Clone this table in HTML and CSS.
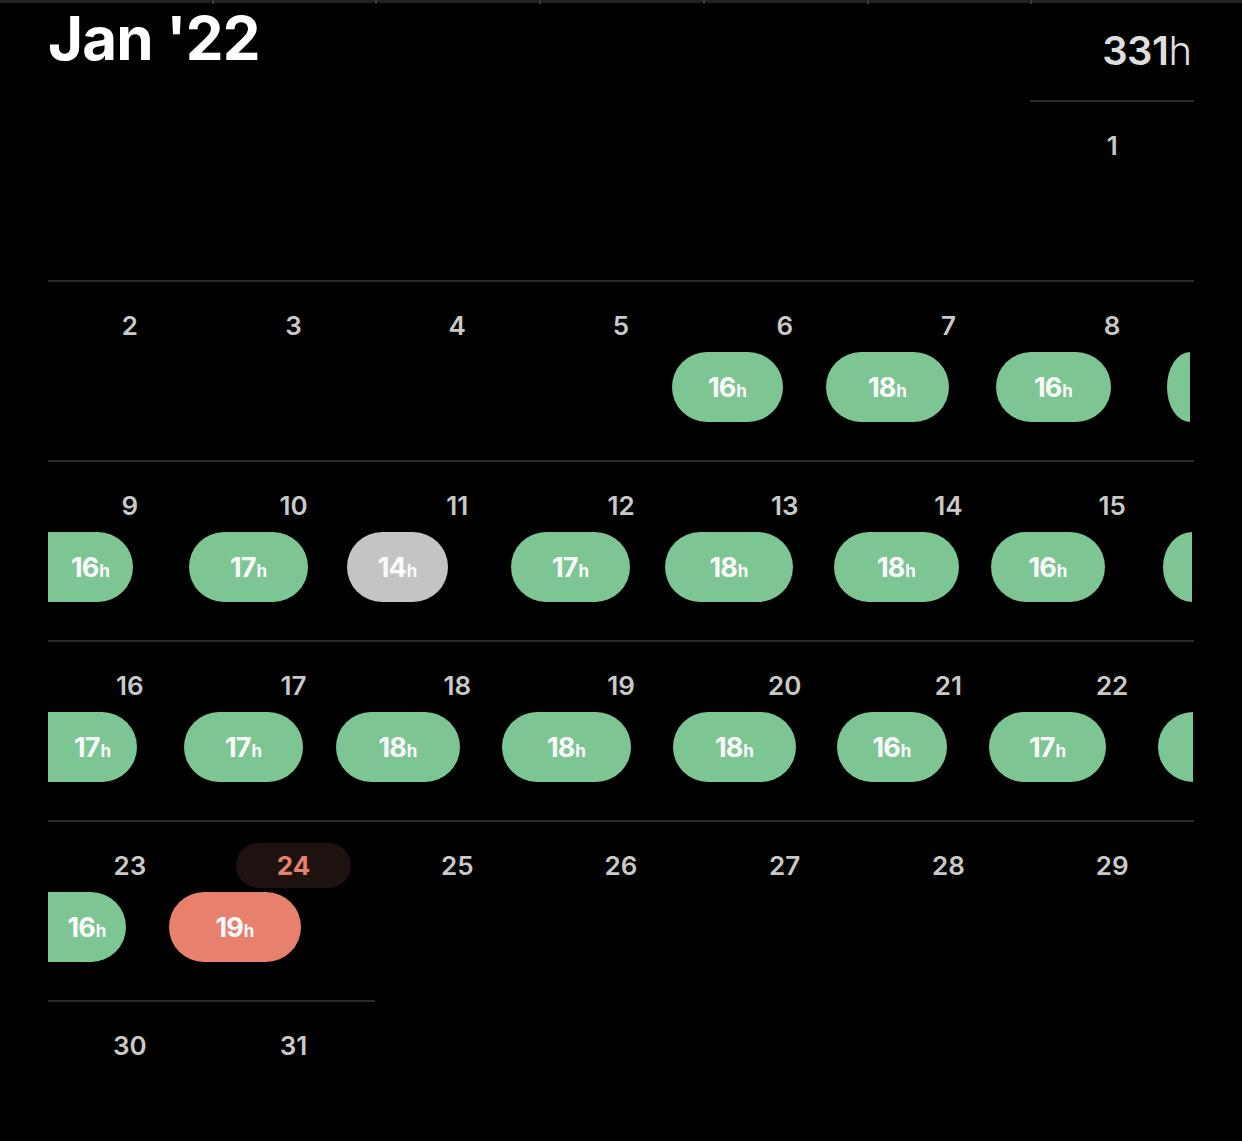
FILE: index.html
```html
<!DOCTYPE html>
<html lang="en">
<head>
<meta charset="utf-8">
<title>Jan '22</title>
<link rel="stylesheet" href="styles.css">
</head>
<body>
<div class="top-rule">
  <div class="ticks"><span></span><span></span><span></span><span></span><span></span><span></span><span></span></div>
</div>
<header class="head">
  <h1 class="month">Jan '22</h1>
  <div class="total">331<span class="unit">h</span></div>
</header>
<main class="cal">
  <section class="week">
    <div class="cell empty"></div><div class="cell empty"></div><div class="cell empty"></div><div class="cell empty"></div><div class="cell empty"></div><div class="cell empty"></div>
    <div class="cell"><span class="day">1</span></div>
  </section>

  <section class="week">
    <div class="cell"><span class="day">2</span></div>
    <div class="cell"><span class="day">3</span></div>
    <div class="cell"><span class="day">4</span></div>
    <div class="cell"><span class="day">5</span></div>
    <div class="cell"><span class="day">6</span></div>
    <div class="cell"><span class="day">7</span></div>
    <div class="cell"><span class="day">8</span></div>
    <div class="track">
      <div class="pill" style="left:624px;width:111px">16<span class="u">h</span></div>
      <div class="pill" style="left:778px;width:123px">18<span class="u">h</span></div>
      <div class="pill" style="left:948px;width:115px">16<span class="u">h</span></div>
      <div class="pill cut-right" style="left:1119px;width:23px"></div>
    </div>
  </section>

  <section class="week">
    <div class="cell"><span class="day">9</span></div>
    <div class="cell"><span class="day">10</span></div>
    <div class="cell"><span class="day">11</span></div>
    <div class="cell"><span class="day">12</span></div>
    <div class="cell"><span class="day">13</span></div>
    <div class="cell"><span class="day">14</span></div>
    <div class="cell"><span class="day">15</span></div>
    <div class="track">
      <div class="pill cut-left" style="left:0;width:85px">16<span class="u">h</span></div>
      <div class="pill" style="left:141px;width:119px">17<span class="u">h</span></div>
      <div class="pill grey" style="left:299px;width:101px">14<span class="u">h</span></div>
      <div class="pill" style="left:463px;width:119px">17<span class="u">h</span></div>
      <div class="pill" style="left:617px;width:128px">18<span class="u">h</span></div>
      <div class="pill" style="left:786px;width:125px">18<span class="u">h</span></div>
      <div class="pill" style="left:943px;width:114px">16<span class="u">h</span></div>
      <div class="pill cut-right" style="left:1115px;width:29px"></div>
    </div>
  </section>

  <section class="week">
    <div class="cell"><span class="day">16</span></div>
    <div class="cell"><span class="day">17</span></div>
    <div class="cell"><span class="day">18</span></div>
    <div class="cell"><span class="day">19</span></div>
    <div class="cell"><span class="day">20</span></div>
    <div class="cell"><span class="day">21</span></div>
    <div class="cell"><span class="day">22</span></div>
    <div class="track">
      <div class="pill cut-left" style="left:0;width:89px">17<span class="u">h</span></div>
      <div class="pill" style="left:136px;width:119px">17<span class="u">h</span></div>
      <div class="pill" style="left:288px;width:124px">18<span class="u">h</span></div>
      <div class="pill" style="left:454px;width:129px">18<span class="u">h</span></div>
      <div class="pill" style="left:625px;width:123px">18<span class="u">h</span></div>
      <div class="pill" style="left:789px;width:110px">16<span class="u">h</span></div>
      <div class="pill" style="left:941px;width:117px">17<span class="u">h</span></div>
      <div class="pill cut-right" style="left:1110px;width:35px"></div>
    </div>
  </section>

  <section class="week">
    <div class="cell"><span class="day">23</span></div>
    <div class="cell"><span class="day today">24</span></div>
    <div class="cell"><span class="day">25</span></div>
    <div class="cell"><span class="day">26</span></div>
    <div class="cell"><span class="day">27</span></div>
    <div class="cell"><span class="day">28</span></div>
    <div class="cell"><span class="day">29</span></div>
    <div class="track">
      <div class="pill cut-left" style="left:0;width:78px">16<span class="u">h</span></div>
      <div class="pill salmon" style="left:121px;width:132px">19<span class="u">h</span></div>
    </div>
  </section>

  <section class="week">
    <div class="cell"><span class="day">30</span></div>
    <div class="cell"><span class="day">31</span></div>
    <div class="cell empty"></div><div class="cell empty"></div><div class="cell empty"></div><div class="cell empty"></div><div class="cell empty"></div>
  </section>
</main>
</body>
</html>
```

FILE: styles.css
```css
html, body {
  margin: 0;
  padding: 0;
  background: #000;
}
body {
  font-family: Inter, "Noto Sans", sans-serif;
  color: #fff;
  width: 1242px;
  height: 1141px;
  overflow: hidden;
}
.top-rule {
  height: 3px;
  background: #222;
}
.ticks {
  margin: 0 48px;
  display: grid;
  grid-template-columns: repeat(7, 1fr);
}
.ticks span {
  height: 4px;
  border-left: 2px solid #3a3a3a;
}
.ticks span:first-child {
  border-left: 0;
}
.head {
  display: flex;
  justify-content: space-between;
  align-items: flex-start;
  padding: 0 48px;
  height: 97px;
}
.month {
  margin: 0;
  font-size: 60px;
  font-weight: 700;
  line-height: 70px;
  letter-spacing: -0.8px;
  color: #fff;
}
.total {
  margin-top: 23px;
  margin-right: 2px;
  font-size: 40px;
  font-weight: 600;
  line-height: 50px;
  color: #dedede;
  letter-spacing: -0.5px;
}
.total .unit {
  font-weight: 300;
  letter-spacing: 0;
}
.cal {
  padding: 0 48px;
}
.week {
  position: relative;
  display: grid;
  grid-template-columns: repeat(7, 1fr);
  height: 180px;
}
.cell {
  border-top: 2px solid #2b2b2b;
  text-align: center;
}
.cell.empty {
  border-top-color: transparent;
}
.day {
  display: inline-block;
  margin-top: 21px;
  height: 45px;
  line-height: 45px;
  font-size: 26px;
  font-weight: 600;
  color: #c9c9c9;
}
.day.today {
  width: 115px;
  border-radius: 23px;
  background: #1d1210;
  color: #e8806e;
  font-weight: 700;
}
.track {
  position: absolute;
  left: 0;
  right: 0;
  top: 72px;
  height: 70px;
}
.pill {
  position: absolute;
  top: 0;
  height: 70px;
  border-radius: 35px;
  background: #7ec594;
  color: #fbfbfb;
  display: flex;
  align-items: center;
  justify-content: center;
  font-size: 27px;
  font-weight: 700;
  letter-spacing: -1px;
  box-sizing: border-box;
}
.pill .u {
  font-size: 17px;
  letter-spacing: 0;
  margin-top: 8px;
  margin-left: 1px;
}
.pill.grey {
  background: #c4c4c4;
}
.pill.salmon {
  background: #e8806e;
}
.pill.cut-left {
  border-radius: 0 35px 35px 0;
}
.pill.cut-right {
  border-radius: 100% 0 0 100% / 50% 0 0 50%;
}
```
